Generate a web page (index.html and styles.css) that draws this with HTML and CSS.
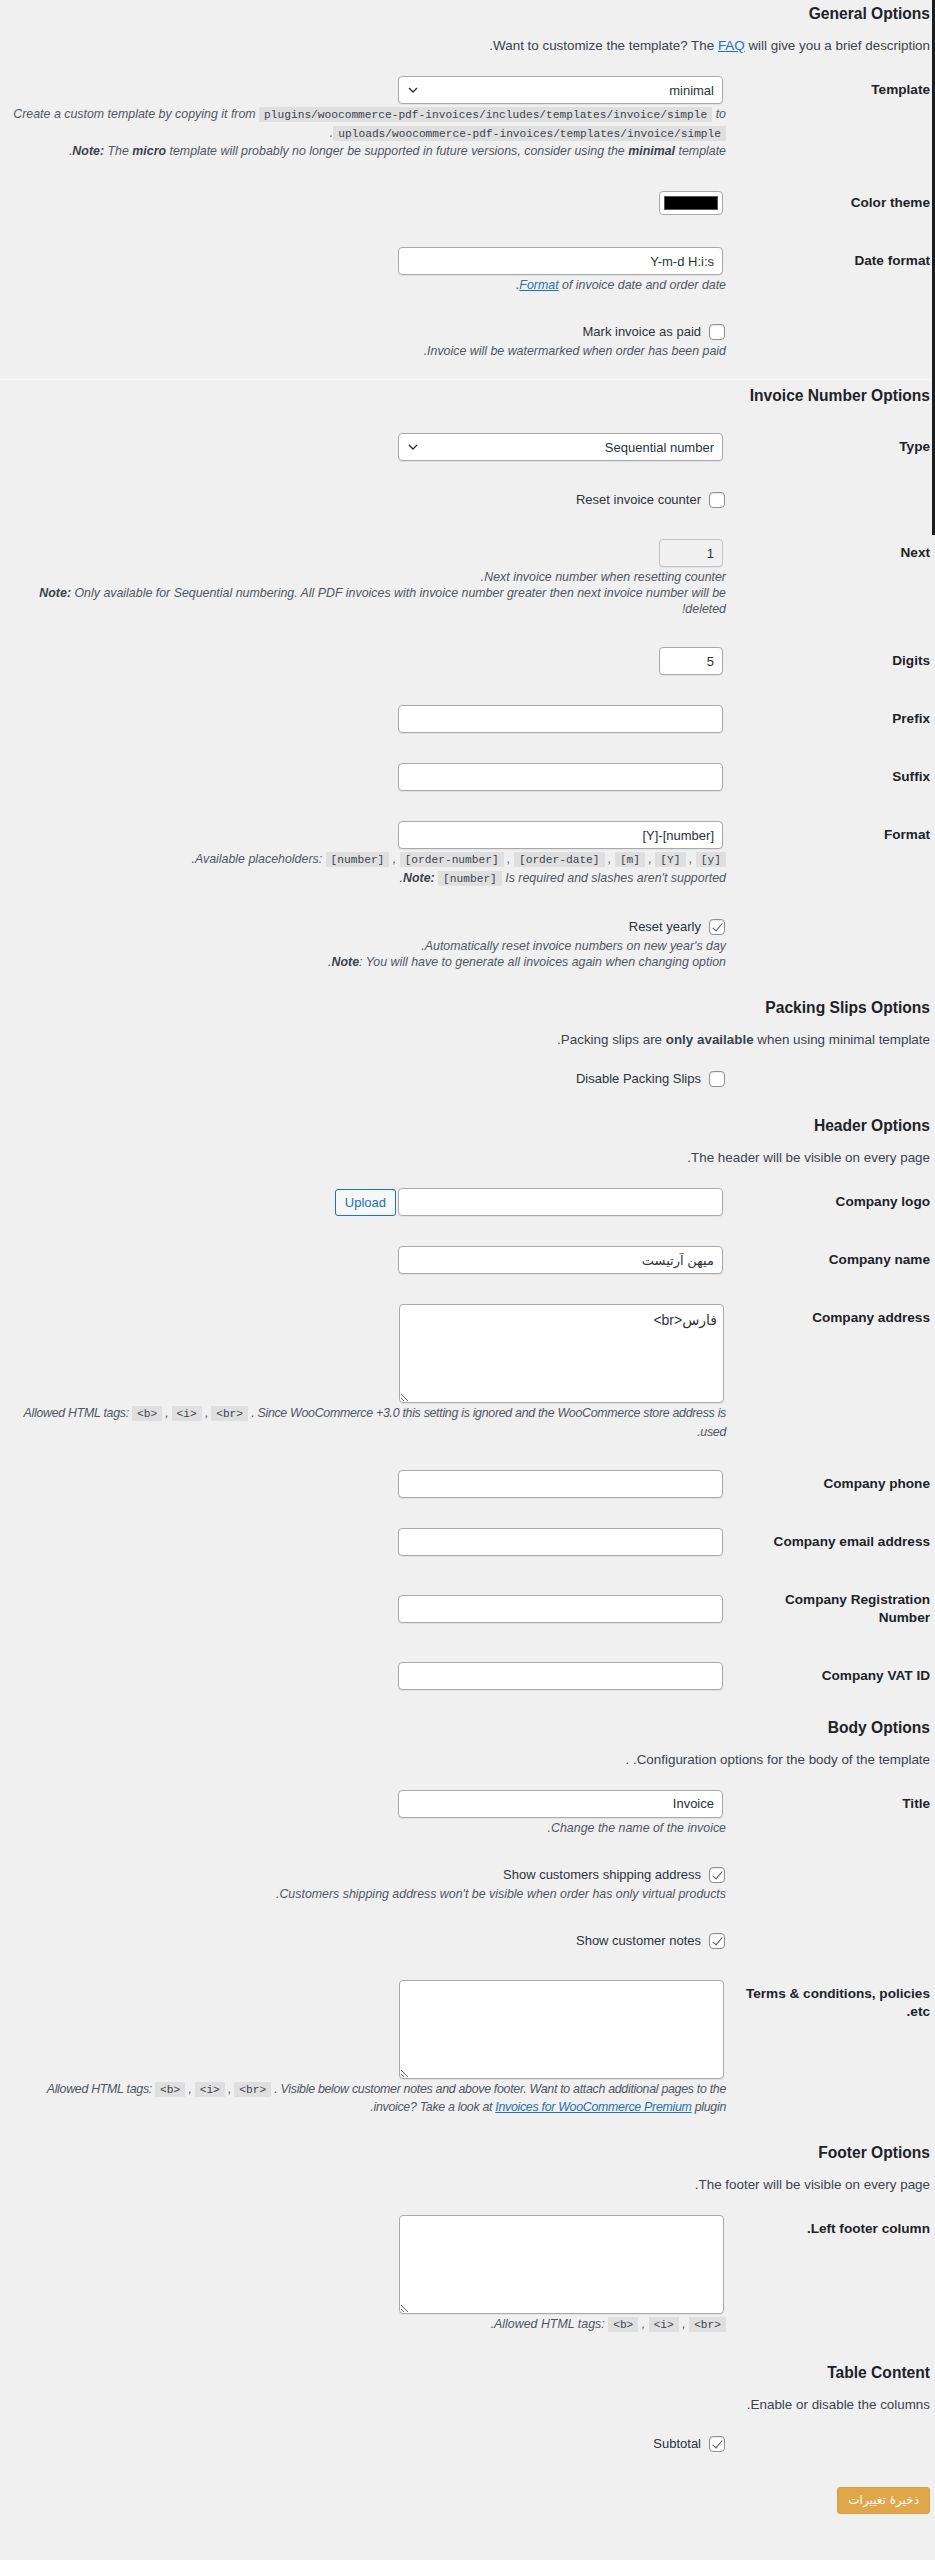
FILE: index.html
```html
<!DOCTYPE html>
<html lang="en" dir="rtl">
<head>
  <meta charset="UTF-8">
  <title>Invoices for WooCommerce — Template</title>
  <link rel="stylesheet" href="styles.css">
</head>
<body>
  <div class="edge"></div>

  <form class="wrap" onsubmit="return false">

    <!-- General -->
    <section class="block first">
      <h2>General Options</h2>
      <p class="intro">Want to customize the template? The <a href="#">FAQ</a> will give you a brief description.</p>

      <div class="row">
        <div class="th"><label for="template">Template</label></div>
        <div class="td">
          <span class="select-box">
            <select id="template"><option>minimal</option><option>micro</option></select>
            <svg class="chev" width="10" height="6" viewBox="0 0 10 6"><polyline points="1,1 5,5 9,1" fill="none" stroke="#2c3338" stroke-width="1.4"/></svg>
          </span>
          <p class="description">Create a custom template by copying it from <code>plugins/woocommerce-pdf-invoices/includes/templates/invoice/simple</code> to <code>uploads/woocommerce-pdf-invoices/templates/invoice/simple</code>.<br><b>Note:</b> The <b>micro</b> template will probably no longer be supported in future versions, consider using the <b>minimal</b> template.</p>
        </div>
      </div>

      <div class="row">
        <div class="th"><label for="color">Color theme</label></div>
        <div class="td"><input type="color" id="color" value="#000000"></div>
      </div>

      <div class="row">
        <div class="th"><label for="dateformat">Date format</label></div>
        <div class="td">
          <input type="text" id="dateformat" class="regular ltr" value="Y-m-d H:i:s">
          <p class="description"><a href="#">Format</a> of invoice date and order date.</p>
        </div>
      </div>

      <div class="row">
        <div class="th"></div>
        <div class="td">
          <label class="check"><input type="checkbox"> Mark invoice as paid</label>
          <p class="description">Invoice will be watermarked when order has been paid.</p>
        </div>
      </div>
    </section>

    <!-- Invoice number -->
    <section class="block">
      <h2>Invoice Number Options</h2>

      <div class="row">
        <div class="th"><label for="numtype">Type</label></div>
        <div class="td">
          <span class="select-box">
            <select id="numtype"><option>Sequential number</option><option>Order number</option></select>
            <svg class="chev" width="10" height="6" viewBox="0 0 10 6"><polyline points="1,1 5,5 9,1" fill="none" stroke="#2c3338" stroke-width="1.4"/></svg>
          </span>
        </div>
      </div>

      <div class="row">
        <div class="th"></div>
        <div class="td"><label class="check"><input type="checkbox"> Reset invoice counter</label></div>
      </div>

      <div class="row">
        <div class="th"><label for="next">Next</label></div>
        <div class="td">
          <input type="text" id="next" class="small" value="1" readonly>
          <p class="description">Next invoice number when resetting counter.<br><b>Note:</b> Only available for Sequential numbering. All PDF invoices with invoice number greater then next invoice number will be deleted!</p>
        </div>
      </div>

      <div class="row">
        <div class="th"><label for="digits">Digits</label></div>
        <div class="td"><input type="text" id="digits" class="small" value="5"></div>
      </div>

      <div class="row">
        <div class="th"><label for="prefix">Prefix</label></div>
        <div class="td"><input type="text" id="prefix" class="regular"></div>
      </div>

      <div class="row">
        <div class="th"><label for="suffix">Suffix</label></div>
        <div class="td"><input type="text" id="suffix" class="regular"></div>
      </div>

      <div class="row">
        <div class="th"><label for="format">Format</label></div>
        <div class="td">
          <input type="text" id="format" class="regular ltr" value="[Y]-[number]">
          <p class="description">Available placeholders: <code>[number]</code> , <code>[order-number]</code> , <code>[order-date]</code> , <code>[m]</code> , <code>[Y]</code> , <code>[y]</code>.<br><b>Note:</b> <code>[number]</code> Is required and slashes aren't supported.</p>
        </div>
      </div>

      <div class="row">
        <div class="th"></div>
        <div class="td">
          <label class="check"><input type="checkbox" checked> Reset yearly</label>
          <p class="description">Automatically reset invoice numbers on new year's day.<br><b>Note</b>: You will have to generate all invoices again when changing option.</p>
        </div>
      </div>
    </section>

    <!-- Packing slips -->
    <section class="block">
      <h2>Packing Slips Options</h2>
      <p class="intro">Packing slips are <b>only available</b> when using minimal template.</p>

      <div class="row">
        <div class="th"></div>
        <div class="td"><label class="check"><input type="checkbox"> Disable Packing Slips</label></div>
      </div>
    </section>

    <!-- Header -->
    <section class="block">
      <h2>Header Options</h2>
      <p class="intro">The header will be visible on every page.</p>

      <div class="row">
        <div class="th"><label for="logo">Company logo</label></div>
        <div class="td">
          <div class="with-button">
            <input type="text" id="logo" class="regular">
            <button type="button" class="button">Upload</button>
          </div>
        </div>
      </div>

      <div class="row">
        <div class="th"><label for="cname">Company name</label></div>
        <div class="td"><input type="text" id="cname" class="regular" value="میهن آرتیست"></div>
      </div>

      <div class="row">
        <div class="th"><label for="caddress">Company address</label></div>
        <div class="td">
          <textarea id="caddress">فارس&lt;br&gt;</textarea>
          <p class="description tight">Allowed HTML tags: <code>&lt;b&gt;</code> , <code>&lt;i&gt;</code> , <code>&lt;br&gt;</code> . Since WooCommerce +3.0 this setting is ignored and the WooCommerce store address is used.</p>
        </div>
      </div>

      <div class="row">
        <div class="th"><label for="cphone">Company phone</label></div>
        <div class="td"><input type="text" id="cphone" class="regular"></div>
      </div>

      <div class="row">
        <div class="th"><label for="cemail">Company email address</label></div>
        <div class="td"><input type="text" id="cemail" class="regular"></div>
      </div>

      <div class="row">
        <div class="th"><label for="creg">Company Registration Number</label></div>
        <div class="td"><input type="text" id="creg" class="regular"></div>
      </div>

      <div class="row">
        <div class="th"><label for="cvat">Company VAT ID</label></div>
        <div class="td"><input type="text" id="cvat" class="regular"></div>
      </div>
    </section>

    <!-- Body -->
    <section class="block">
      <h2>Body Options</h2>
      <p class="intro">Configuration options for the body of the template. .</p>

      <div class="row">
        <div class="th"><label for="title">Title</label></div>
        <div class="td">
          <input type="text" id="title" class="regular" value="Invoice">
          <p class="description">Change the name of the invoice.</p>
        </div>
      </div>

      <div class="row">
        <div class="th"></div>
        <div class="td">
          <label class="check"><input type="checkbox" checked> Show customers shipping address</label>
          <p class="description">Customers shipping address won't be visible when order has only virtual products.</p>
        </div>
      </div>

      <div class="row">
        <div class="th"></div>
        <div class="td"><label class="check"><input type="checkbox" checked> Show customer notes</label></div>
      </div>

      <div class="row">
        <div class="th"><label for="terms">Terms &amp; conditions, policies etc.</label></div>
        <div class="td">
          <textarea id="terms"></textarea>
          <p class="description tight">Allowed HTML tags: <code>&lt;b&gt;</code> , <code>&lt;i&gt;</code> , <code>&lt;br&gt;</code> . Visible below customer notes and above footer. Want to attach additional pages to the invoice? Take a look at <a href="#">Invoices for WooCommerce Premium</a> plugin.</p>
        </div>
      </div>
    </section>

    <!-- Footer -->
    <section class="block">
      <h2>Footer Options</h2>
      <p class="intro">The footer will be visible on every page.</p>

      <div class="row">
        <div class="th"><label for="leftfooter">Left footer column.</label></div>
        <div class="td">
          <textarea id="leftfooter"></textarea>
          <p class="description">Allowed HTML tags: <code>&lt;b&gt;</code> , <code>&lt;i&gt;</code> , <code>&lt;br&gt;</code>.</p>
        </div>
      </div>
    </section>

    <!-- Table content -->
    <section class="block">
      <h2>Table Content</h2>
      <p class="intro">Enable or disable the columns.</p>

      <div class="row">
        <div class="th"></div>
        <div class="td"><label class="check"><input type="checkbox" checked> Subtotal</label></div>
      </div>
    </section>

    <p class="submit"><button type="submit" class="button-primary">ذخیرهٔ تغییرات</button></p>
  </form>
</body>
</html>
```

FILE: styles.css
```css
* { box-sizing: border-box; }

html { background: #f0f0f1; }

body {
  margin: 0;
  font-family: "Liberation Sans", "DejaVu Sans", sans-serif;
  font-size: 13px;
  color: #3c434a;
  background: #f0f0f1;
}

a { color: #2271b1; }

/* dark strip on the right edge */
.edge {
  position: absolute;
  top: 0;
  right: 0;
  width: 3px;
  height: 535px;
  background: #1d1d1d;
}

.wrap {
  padding: 0 5px 0 13px;
}

.block h2 {
  font-size: 15.6px;
  line-height: 21px;
  font-weight: bold;
  color: #1d2327;
  margin: 12px 0 12px;
}

.first h2 { margin-top: 3px; }

.first {
  margin-left: -13px;
  padding-left: 13px;
  padding-bottom: 5px;
  border-bottom: 1px solid #f9f9f9;
}

.first + .block h2 { margin-top: 5px; }

.intro {
  margin: 12px 0 6px;
  font-size: 13.4px;
  line-height: 19px;
}

.row {
  display: grid;
  grid-template-columns: 204px 1fr;
}

.th {
  align-self: start;
  padding: 20px 0 20px 10px;
  line-height: 18px;
  font-size: 13.6px;
  font-weight: bold;
  color: #1d2327;
}

.td {
  align-self: center;
  padding: 15px 0;
  min-width: 0;
}

input[type="text"], select, textarea {
  font-family: inherit;
  font-size: 13px;
  color: #2c3338;
  background: #fff;
  border: 1px solid #a7aaad;
  border-radius: 4px;
  box-shadow: 0 1px 1px rgba(0,0,0,0.06);
  margin: 0 3px 0 0;
}

input[type="text"] {
  display: block;
  height: 28px;
  padding: 0 8px;
}

.regular { width: 325px; }
.small { width: 64px; }

.ltr {
  direction: ltr;
  text-align: right;
}

input[readonly] {
  background: #f0f0f1;
  border-color: #c3c4c7;
}

.select-box {
  position: relative;
  display: block;
  width: 328px;
}

select {
  appearance: none;
  -webkit-appearance: none;
  width: 325px;
  height: 28px;
  padding: 0 8px 0 24px;
  display: block;
}

.chev {
  position: absolute;
  left: 10px;
  top: 11px;
  pointer-events: none;
}

input[type="color"] {
  appearance: none;
  -webkit-appearance: none;
  display: block;
  width: 64px;
  height: 24px;
  padding: 4px;
  margin: 0 3px 0 0;
  border: 1px solid #a7aaad;
  border-radius: 4px;
  background: #fff;
  cursor: pointer;
}

input[type="color"]::-webkit-color-swatch-wrapper { padding: 0; }
input[type="color"]::-webkit-color-swatch { border: 1px solid #555; border-radius: 0; }

textarea {
  display: block;
  width: 325px;
  height: 99px;
  padding: 6px 6px;
  font-size: 14px;
  line-height: 1.4;
  resize: vertical;
  margin-right: 2px;
}

.check {
  display: flex;
  align-items: center;
  gap: 8px;
  line-height: 18px;
  color: #2c3338;
}

input[type="checkbox"] {
  appearance: none;
  -webkit-appearance: none;
  position: relative;
  flex: none;
  width: 16px;
  height: 16px;
  margin: 0 1px 0 0;
  border: 1px solid #8c8f94;
  border-radius: 4px;
  background: #fff;
  box-shadow: inset 0 1px 2px rgba(0,0,0,0.1);
}

input[type="checkbox"]:checked::before {
  content: "";
  position: absolute;
  left: 5px;
  top: 1px;
  width: 4px;
  height: 9px;
  border-right: 1.6px solid #50575e;
  border-bottom: 1.6px solid #50575e;
  transform: rotate(40deg);
}

.description {
  margin: 2px 0 0;
  font-size: 12.4px;
  font-style: italic;
  line-height: 16px;
  color: #50575e;
}

.description.tight { letter-spacing: -0.3px; }

.description b { color: #3c434a; }

code {
  unicode-bidi: embed;
  direction: ltr;
  font-family: "Liberation Mono", "DejaVu Sans Mono", monospace;
  font-style: normal;
  font-size: 11.2px;
  line-height: 17.5px;
  letter-spacing: 0;
  padding: 2px 5px 1px;
  background: rgba(0,0,0,0.07);
  color: #3c434a;
}

.with-button {
  display: flex;
  align-items: center;
  gap: 2px;
}

.button {
  height: 27px;
  padding: 0 9px;
  font-family: inherit;
  font-size: 13px;
  color: #2271b1;
  background: #f6f7f7;
  border: 1px solid #2271b1;
  border-radius: 3px;
  cursor: pointer;
}

.submit {
  margin: 19px 0 0;
  padding-bottom: 40px;
}

.button-primary {
  height: 27px;
  padding: 0 10px;
  font-family: "DejaVu Sans", sans-serif;
  font-size: 12px;
  color: #fff;
  background: #e0a74a;
  border: 1px solid #d9a043;
  border-radius: 3px;
  cursor: pointer;
}
```
